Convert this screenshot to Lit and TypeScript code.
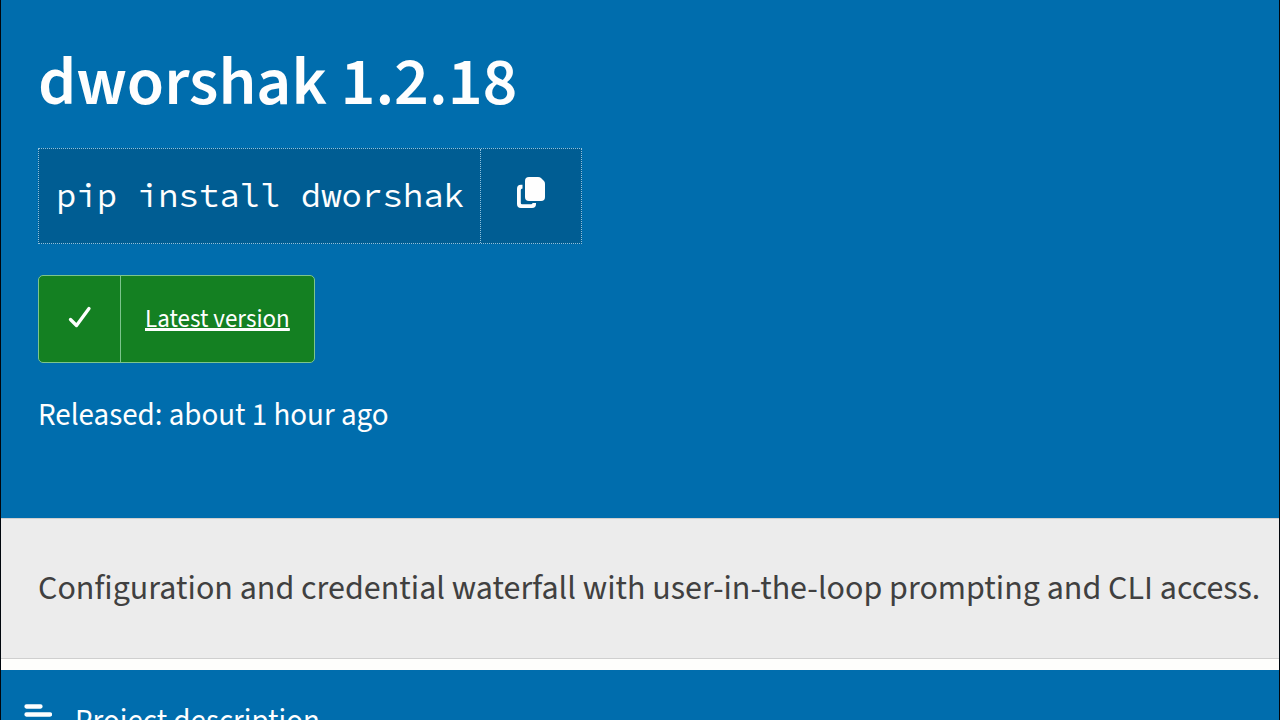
import { LitElement, html, css } from "lit";
import { customElement, state } from "lit/decorators.js";

@customElement("app-root")
export class AppRoot extends LitElement {
  @state() private copied = false;

  static styles = css`
    :host {
      display: block;
      box-sizing: border-box;
      height: 100vh;
      overflow: hidden;
      border: solid #00060c;
      border-width: 0 1px;
      background: #fefefc;
      color: #fefefe;
      font-family: "Source Sans 3", "Noto Sans CJK SC", sans-serif;
      font-size: 31px;
      line-height: 40px;
    }
    .banner {
      background: #006dad;
      padding: 49px 37px 83px;
    }
    .title {
      margin: 0 0 31px;
      font-size: 68px;
      line-height: 68px;
      font-weight: 600;
    }
    .install {
      display: flex;
      width: fit-content;
      margin-bottom: 31px;
      background: #005d93;
      border: 1px dotted #8fc0dd;
    }
    .command {
      padding: 23px 16px 25px 17px;
      font-family: "Source Code Pro", "Noto Sans Mono CJK SC", "Liberation Mono", monospace;
      font-size: 34px;
      line-height: 46px;
      white-space: pre;
    }
    .copy {
      display: grid;
      place-items: center;
      width: 101px;
      padding: 0 0 6px;
      border: 0;
      border-left: 1px dotted #8fc0dd;
      background: none;
      color: inherit;
      cursor: pointer;
    }
    .copy svg {
      width: 30px;
      height: 32px;
    }
    .status {
      display: flex;
      width: fit-content;
      box-sizing: border-box;
      margin-bottom: 32px;
      border: 1px solid #7cc48c;
      border-radius: 5px;
      background: #148022;
      color: inherit;
      font-size: 25px;
    }
    .check {
      display: grid;
      place-items: center;
      width: 81px;
      padding-bottom: 4px;
      border-right: 1px solid #7cc48c;
    }
    .check svg {
      width: 26px;
      height: 24px;
    }
    .label {
      padding: 23px 24px;
      text-decoration: underline;
      text-decoration-thickness: 2px;
    }
    .date {
      margin: 0;
    }
    .summary {
      margin: 0 0 11px;
      padding: 50px 0 49px 37px;
      border: solid #cfcfcf;
      border-width: 1px 0;
      background: #ececec;
      color: #404040;
      font-size: 34px;
      white-space: nowrap;
    }
    .tab {
      display: flex;
      align-items: center;
      gap: 23px;
      padding: 31px 22px;
      background: #006dad;
      color: inherit;
      text-decoration: none;
    }
    .tab svg {
      width: 29px;
      height: 36px;
    }
  `;

  private copy() {
    navigator.clipboard?.writeText("pip install dworshak");
    this.copied = true;
  }

  render() {
    return html`
      <header class="banner">
        <h1 class="title">dworshak 1.2.18</h1>
        <div class="install">
          <span class="command">pip install dworshak</span>
          <button class="copy" aria-label=${this.copied ? "Copied" : "Copy to clipboard"} @click=${this.copy}>
            <svg viewBox="0 0 30 32" fill="currentColor" aria-hidden="true">
              <path d="M13 0H22Q24 0 25 1L28 4Q29 5 29 7V20Q29 24 25 24H13Q9 24 9 20V4Q9 0 13 0Z" />
              <path d="M6.500 7.800H5Q1 7.800 1 11.800V27Q1 31 5 31H16Q20 31 20 27V26H16.500Q16.500 27.300 15 27.300H6Q4.800 27.300 4.800 26V13Q4.800 11.500 6.500 11.500Z" />
            </svg>
          </button>
        </div>
        <a class="status" href="#latest">
          <span class="check">
            <svg viewBox="0 0 26 24" fill="none" stroke="currentColor" stroke-width="3.300" stroke-linecap="round" stroke-linejoin="round" aria-hidden="true">
              <path d="M3.500 14.500L9.500 20.500L22 3.500" />
            </svg>
          </span>
          <span class="label">Latest version</span>
        </a>
        <p class="date">Released: <time>about 1 hour ago</time></p>
      </header>
      <p class="summary">Configuration and credential waterfall with user-in-the-loop prompting and CLI access.</p>
      <nav>
        <a class="tab" href="#description">
          <svg viewBox="0 0 29 36" stroke="currentColor" stroke-width="4.300" stroke-linecap="round" aria-hidden="true">
            <path d="M3.500 3.500H17.500M3.500 11.500H27M3.500 19.500H17.500M3.500 28H27" />
          </svg>
          <span>Project description</span>
        </a>
      </nav>
    `;
  }
}
